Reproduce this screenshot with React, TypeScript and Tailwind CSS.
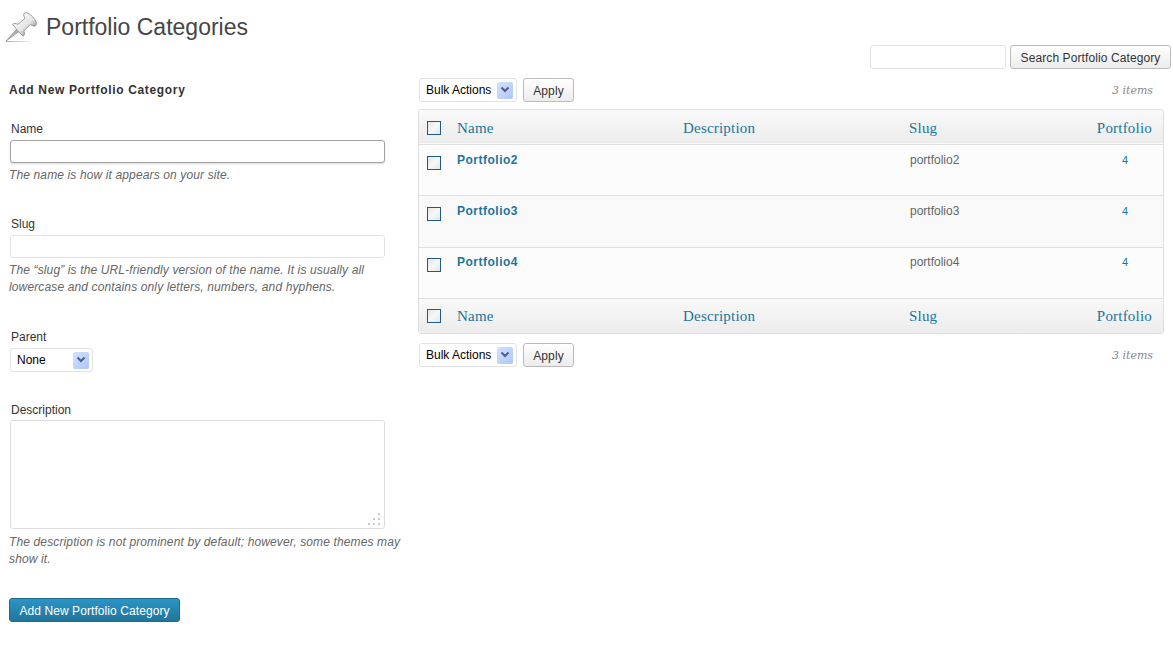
import React from "react";

const itemsRows = [
  { name: "Portfolio2", slug: "portfolio2", h: "h-[51px]", cb: "pt-[11px]", txt: "pt-[7px]" },
  { name: "Portfolio3", slug: "portfolio3", h: "h-[52px]", cb: "pt-[11px]", txt: "pt-[7px]" },
  { name: "Portfolio4", slug: "portfolio4", h: "h-[51px]", cb: "pt-[10px]", txt: "pt-[6px]" },
];

function PinIcon() {
  return (
    <svg width="34" height="34" viewBox="4 10 34 34" className="shrink-0">
      <defs>
        <linearGradient id="pinBody" x1="0" y1="0" x2="0" y2="1">
          <stop offset="0" stopColor="#f6f6f6" />
          <stop offset="0.6" stopColor="#e6e6e6" />
          <stop offset="1" stopColor="#a9a9a9" />
        </linearGradient>
        <linearGradient id="pinShadow" x1="0" y1="0" x2="1" y2="0">
          <stop offset="0" stopColor="#aaaaaa" />
          <stop offset="1" stopColor="#eeeeee" />
        </linearGradient>
      </defs>
      <rect x="6" y="41" width="25" height="1" fill="url(#pinShadow)" />
      <g transform="translate(6 41) rotate(-42)">
        <path d="M0 0 L17 -1.8 L17 1.8 Z" fill="#b4b4b4" stroke="#8a8a8a" strokeWidth="0.6" />
        <path d="M16 -8 Q19 -8 20 -4.5 L29 -4 Q30 -8 32 -8.5 Q36 -8 36 0 Q36 8 32 8.5 Q30 8 29 4 L20 4.5 Q19 8 16 8 Q15 0 16 -8 Z" fill="url(#pinBody)" stroke="#8e8e8e" strokeWidth="0.8" />
      </g>
    </svg>
  );
}

function FakeSelect({ label, className }: { label: string; className: string }) {
  return (
    <div className={`flex h-[24px] items-center justify-between rounded-[3px] border border-[#e3e3e3] bg-white pl-[6px] pr-[3px] text-[12px] text-black ${className}`}>
      <span>{label}</span>
      <span className="flex h-[17px] w-[16px] items-center justify-center rounded-[2px] bg-gradient-to-br from-[#d5e1fd] to-[#aec6fa]">
        <svg width="10" height="8" viewBox="0 0 10 8">
          <path d="M1.5 1.5 L5 5 L8.5 1.5" fill="none" stroke="#4d6185" strokeWidth="2" />
        </svg>
      </span>
    </div>
  );
}

function Button({ children, className }: { children: React.ReactNode; className: string }) {
  return (
    <button className={`h-[24px] rounded-[3px] border border-[#bbbbbb] bg-gradient-to-b from-white to-[#ececec] pt-px text-[12px] tracking-[0.1px] text-[#333333] ${className}`}>
      {children}
    </button>
  );
}

function Checkbox() {
  return <span className="block h-[14px] w-[14px] border border-[#1f5a8a] bg-gradient-to-br from-[#e4e4e4] via-[#f8f8f8] to-[#e4e4e4]" />;
}

function TableNav() {
  return (
    <div className="flex h-[24px] items-center">
      <FakeSelect label="Bulk Actions" className="ml-px w-[98px]" />
      <Button className="ml-[6px] w-[51px]">Apply</Button>
      <span className="ml-auto mr-[11px] pt-[3px] font-['DejaVu_Serif',serif] text-[11px] italic text-[#888888]">3 items</span>
    </div>
  );
}

function HeadRow({ className, pad }: { className: string; pad: string }) {
  const th = `p-0 text-left align-middle font-['Liberation_Serif',serif] text-[15px] font-normal tracking-[0.2px] text-[#21759b] ${pad}`;
  return (
    <tr className={`bg-gradient-to-b from-[#f9f9f9] to-[#ececec] ${className}`}>
      <td className={`pl-[8px] ${pad}`}><Checkbox /></td>
      <th className={th}>Name</th>
      <th className={th}>Description</th>
      <th className={th}>Slug</th>
      <th className={`${th} pr-[11px] text-right`}>Portfolio</th>
    </tr>
  );
}

function Label({ children, className }: { children: React.ReactNode; className: string }) {
  return <div className={`pl-[2px] text-[12px] leading-[15px] text-[#333333] ${className}`}>{children}</div>;
}

function Help({ children, className = "mt-[4px]" }: { children: React.ReactNode; className?: string }) {
  return <p className={`w-[400px] text-[12px] italic leading-[17px] tracking-[0.13px] text-[#666666] ${className}`}>{children}</p>;
}

export default function App() {
  return (
    <div className="h-[655px] w-[1173px] overflow-hidden bg-white font-['Liberation_Sans',Arial,sans-serif]">
      <header className="flex h-[45px] items-center pl-[4px] pt-[8px]">
        <PinIcon />
        <h1 className="ml-[8px] text-[23px] leading-[30px] text-[#464646]">Portfolio Categories</h1>
      </header>

      <div className="flex justify-end gap-[4px] pr-[2px]">
        <div className="h-[24px] w-[136px] rounded-[3px] border border-[#e3e3e3] bg-white" />
        <Button className="w-[161px]">Search Portfolio Category</Button>
      </div>

      <div className="mt-[9px] flex">
        {/* Add form */}
        <div className="w-[418px] shrink-0 pl-[9px]">
          <h3 className="mt-[4px] text-[12px] font-bold leading-[16px] tracking-[0.66px] text-[#333333]">Add New Portfolio Category</h3>

          <Label className="mt-[24px]">Name</Label>
          <div className="ml-px mt-[3px] h-[23px] w-[375px] rounded-[3px] border border-[#a3a3a3] bg-white shadow-[0_1px_2px_rgba(0,0,0,0.15)]" />
          <Help>The name is how it appears on your site.</Help>

          <Label className="mt-[33px]">Slug</Label>
          <div className="ml-px mt-[3px] h-[23px] w-[375px] rounded-[3px] border border-[#e3e3e3] bg-white" />
          <Help>The “slug” is the URL-friendly version of the name. It is usually all lowercase and contains only letters, numbers, and hyphens.</Help>

          <Label className="mt-[34px]">Parent</Label>
          <FakeSelect label="None" className="ml-px mt-[3px] w-[83px]" />

          <Label className="mt-[31px]">Description</Label>
          <div className="relative ml-px mt-[2px] h-[109px] w-[375px] rounded-[3px] border border-[#dddddd] bg-white">
            <svg width="13" height="13" viewBox="0 0 13 13" className="absolute bottom-[2px] right-[3px]">
              <path d="M10 0h2v2h-2zM5 5h2v2H5zM10 5h2v2h-2zM0 10h2v2H0zM5 10h2v2H5zM10 10h2v2h-2z" fill="#c9c9c9" />
            </svg>
          </div>
          <Help className="mt-[5px]">The description is not prominent by default; however, some themes may show it.</Help>

          <button className="mt-[30px] h-[24px] w-[171px] rounded-[3px] border border-[#1f6a8c] bg-gradient-to-b from-[#2a95c5] to-[#21759b] pt-px text-[12px] tracking-[0.08px] text-white">
            Add New Portfolio Category
          </button>
        </div>

        {/* Category list */}
        <div className="w-[746px] shrink-0">
          <TableNav />
          <div className="mt-[7px] overflow-hidden rounded-[3px] border border-[#dfdfdf]">
            <table className="w-full table-fixed border-collapse">
              <colgroup>
                <col className="w-[38px]" />
                <col className="w-[226px]" />
                <col className="w-[226px]" />
                <col className="w-[154px]" />
                <col />
              </colgroup>
              <thead>
                <HeadRow className="h-[34px] border-b border-[#dfdfdf]" pad="pt-[2px]" />
              </thead>
              <tbody>
                {itemsRows.map((row, i) => (
                  <tr key={row.name} className={`border-b border-[#dfdfdf] ${row.h} ${i === 1 ? "bg-[#f9f9f9]" : "bg-[#fcfcfc]"}`}>
                    <td className={`pl-[8px] align-top ${row.cb}`}><Checkbox /></td>
                    <td className={`align-top text-[12px] font-bold leading-[16px] tracking-[0.5px] text-[#21759b] ${row.txt}`}>{row.name}</td>
                    <td />
                    <td className={`pl-px align-top text-[12px] leading-[16px] text-[#666666] ${row.txt}`}>{row.slug}</td>
                    <td className={`pl-[59px] align-top text-[11px] leading-[16px] text-[#21759b] ${row.txt}`}>4</td>
                  </tr>
                ))}
              </tbody>
              <tfoot>
                <HeadRow className="h-[35px]" pad="pt-0" />
              </tfoot>
            </table>
          </div>
          <div className="mt-[9px]">
            <TableNav />
          </div>
        </div>
      </div>
    </div>
  );
}
